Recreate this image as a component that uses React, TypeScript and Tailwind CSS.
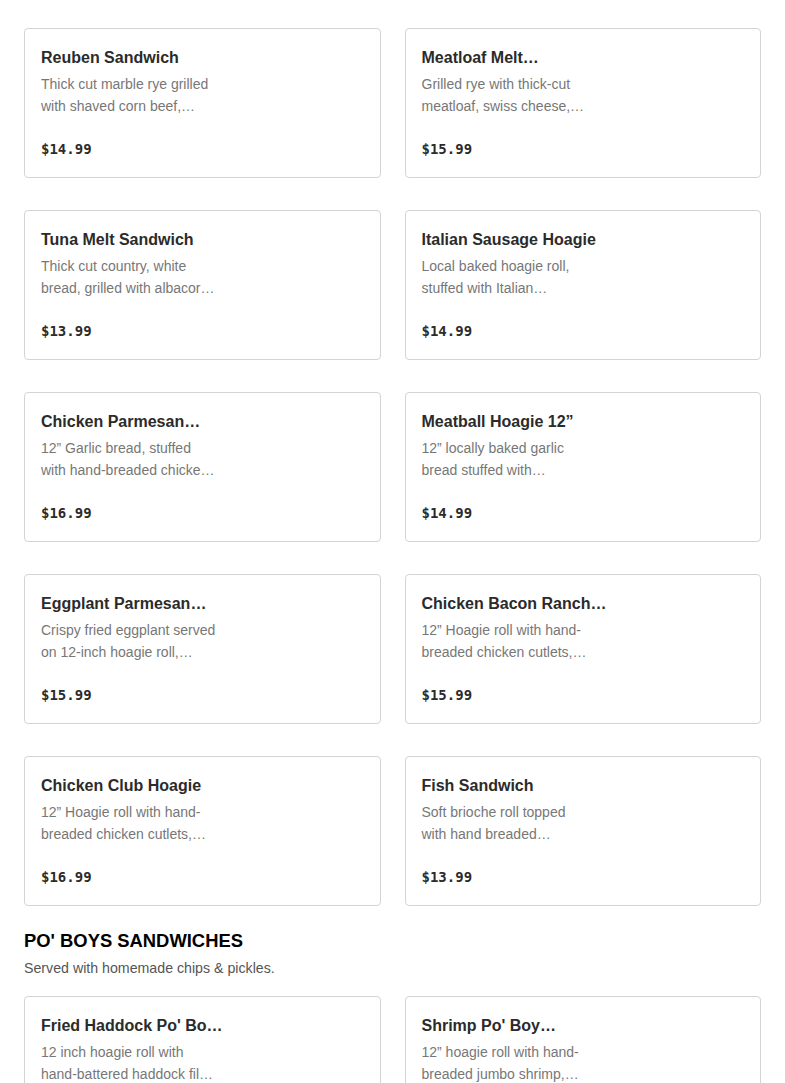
const items = [
  { name: "Reuben Sandwich", lines: ["Thick cut marble rye grilled", "with shaved corn beef,…"], price: "$14.99" },
  { name: "Meatloaf Melt…", lines: ["Grilled rye with thick-cut", "meatloaf, swiss cheese,…"], price: "$15.99" },
  { name: "Tuna Melt Sandwich", lines: ["Thick cut country, white", "bread, grilled with albacor…"], price: "$13.99" },
  { name: "Italian Sausage Hoagie", lines: ["Local baked hoagie roll,", "stuffed with Italian…"], price: "$14.99" },
  { name: "Chicken Parmesan…", lines: ["12\u201D Garlic bread, stuffed", "with hand-breaded chicke…"], price: "$16.99" },
  { name: "Meatball Hoagie 12\u201D", lines: ["12\u201D locally baked garlic", "bread stuffed with…"], price: "$14.99" },
  { name: "Eggplant Parmesan…", lines: ["Crispy fried eggplant served", "on 12-inch hoagie roll,…"], price: "$15.99" },
  { name: "Chicken Bacon Ranch…", lines: ["12\u201D Hoagie roll with hand-", "breaded chicken cutlets,…"], price: "$15.99" },
  { name: "Chicken Club Hoagie", lines: ["12\u201D Hoagie roll with hand-", "breaded chicken cutlets,…"], price: "$16.99" },
  { name: "Fish Sandwich", lines: ["Soft brioche roll topped", "with hand breaded…"], price: "$13.99" },
];

const poBoys = [
  { name: "Fried Haddock Po' Bo…", lines: ["12 inch hoagie roll with", "hand-battered haddock fil…"], price: "$16.99" },
  { name: "Shrimp Po' Boy…", lines: ["12\u201D hoagie roll with hand-", "breaded jumbo shrimp,…"], price: "$16.99" },
];

type Item = { name: string; lines: string[]; price: string };

function Card({ item }: { item: Item }) {
  return (
    <div className="h-[150px] rounded-[4px] border border-[#d4d4d4] bg-white px-4 pt-4">
      <p className="mt-px text-[16px] leading-6 font-bold text-[#2b2b2b]">{item.name}</p>
      <div className="mt-[3px] text-[14px] leading-[22px] text-[#777]">
        {item.lines.map((line) => (
          <p key={line}>{line}</p>
        ))}
      </div>
      <p className="mt-[22px] font-['DejaVu_Sans_Mono',monospace] text-[14px] leading-5 font-bold text-[#2b2b2b]">
        {item.price}
      </p>
    </div>
  );
}

export default function App() {
  return (
    <div className="min-h-screen bg-white px-6 pt-[28px] font-['Liberation_Sans',Arial,sans-serif]">
      <div className="grid grid-cols-2 gap-x-6 gap-y-8">
        {items.map((item) => (
          <Card key={item.name} item={item} />
        ))}
      </div>
      <h2 className="mt-[23px] text-[18.4px] leading-6 font-extrabold text-black">
        PO' BOYS SANDWICHES
      </h2>
      <p className="mt-[5px] text-[14.2px] leading-5 text-[#555]">
        Served with homemade chips &amp; pickles.
      </p>
      <div className="mt-[18px] grid grid-cols-2 gap-x-6 gap-y-8">
        {poBoys.map((item) => (
          <Card key={item.name} item={item} />
        ))}
      </div>
    </div>
  );
}
